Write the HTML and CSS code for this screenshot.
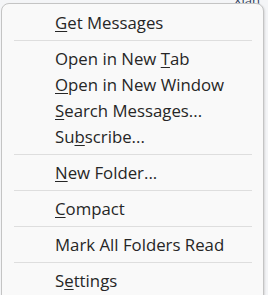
FILE: index.html
```html
<!DOCTYPE html>
<html>
<head>
<meta charset="utf-8">
<link rel="stylesheet" href="styles.css">
</head>
<body>
<div class="backdrop">
  <div class="bg-text">Xian</div>
  <div class="menu">
    <div class="item"><u>G</u>et Messages</div>
    <div class="sep"></div>
    <div class="item">Open in New <u>T</u>ab</div>
    <div class="item"><u>O</u>pen in New Window</div>
    <div class="item"><u>S</u>earch Messages...</div>
    <div class="item">Su<u>b</u>scribe...</div>
    <div class="sep"></div>
    <div class="item"><u>N</u>ew Folder...</div>
    <div class="sep"></div>
    <div class="item"><u>C</u>ompact</div>
    <div class="sep"></div>
    <div class="item">Mark All Folders Read</div>
    <div class="sep"></div>
    <div class="item">S<u>e</u>ttings</div>
  </div>
</div>
</body>
</html>
```

FILE: styles.css
```css
html, body {
  margin: 0;
  padding: 0;
  background: #f4f5f7;
  overflow: hidden;
}
.backdrop {
  position: relative;
  width: 268px;
  height: 295px;
  padding-top: 3px;
  padding-left: 1px;
  box-sizing: border-box;
}
.bg-text {
  position: absolute;
  top: -9px;
  left: 234px;
  font: 13px "Open Sans", sans-serif;
  color: #2a3a5a;
}
.menu {
  position: relative;
  width: 263px;
  height: 300px;
  box-sizing: border-box;
  background: #f9f9f9;
  border: 1px solid #c4c4c4;
  border-radius: 8px;
  box-shadow: 1px 1px 2px rgba(0,0,0,0.12);
  padding-top: 6px;
  font-family: "Open Sans", "Noto Sans", sans-serif;
  font-size: 16.8px;
  color: #262626;
}
.item {
  height: 26px;
  line-height: 26px;
  padding-left: 53px;
  white-space: nowrap;
}
.item u {
  text-decoration: underline;
  text-underline-offset: 2px;
}
.sep {
  height: 1px;
  background: #dedede;
  margin: 4px 11px 5px 12px;
}
```
